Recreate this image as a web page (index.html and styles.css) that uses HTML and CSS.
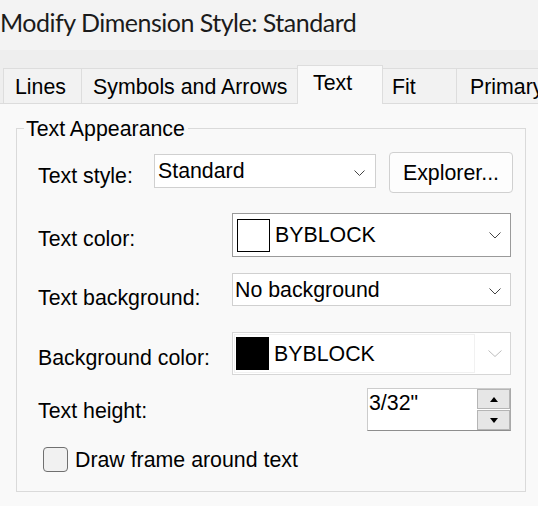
FILE: index.html
```html
<!DOCTYPE html>
<html lang="en">
<head>
<meta charset="utf-8">
<title>Modify Dimension Style: Standard</title>
<link rel="stylesheet" href="styles.css">
</head>
<body>
<div class="window">
  <div class="titlebar">Modify Dimension Style: Standard</div>
  <div class="tabstrip">
    <div class="tab tab-lines">Lines</div>
    <div class="tab tab-symbols">Symbols and Arrows</div>
    <div class="tab tab-text active">Text</div>
    <div class="tab tab-fit">Fit</div>
    <div class="tab tab-primary">Primary Units</div>
  </div>
  <div class="panel">
    <fieldset class="group">
      <legend>Text Appearance</legend>

      <div class="row row-style">
        <span class="label label-style">Text style:</span>
        <div class="combo combo-style">
          <span class="val">Standard</span>
          <svg class="chev chev-style" width="11" height="6" viewBox="0 0 11 6"><polyline points="0.5,0.5 5.5,5.5 10.5,0.5" fill="none" stroke="#444" stroke-width="1"/></svg>
        </div>
        <div class="btn-explorer">Explorer...</div>
      </div>

      <div class="row row-color">
        <span class="label label-wide label-color">Text color:</span>
        <div class="combo combo-color">
          <span class="swatch swatch-white"></span>
          <span class="val val-swatch">BYBLOCK</span>
          <svg class="chev" width="12" height="7" viewBox="0 0 12 7"><polyline points="0.5,0.5 6,6 11.5,0.5" fill="none" stroke="#444" stroke-width="1"/></svg>
        </div>
      </div>

      <div class="row row-bgtext">
        <span class="label label-wide label-bgtext">Text background:</span>
        <div class="combo combo-bgtext">
          <span class="val">No background</span>
          <svg class="chev" width="12" height="7" viewBox="0 0 12 7"><polyline points="0.5,0.5 6,6 11.5,0.5" fill="none" stroke="#444" stroke-width="1"/></svg>
        </div>
      </div>

      <div class="row row-bgcolor">
        <span class="label label-wide label-bgcolor">Background color:</span>
        <div class="combo combo-bgcolor">
          <div class="field">
            <span class="swatch swatch-black"></span>
            <span class="val val-swatch">BYBLOCK</span>
          </div>
          <div class="dropbtn">
            <svg width="14" height="7" viewBox="0 0 14 7"><polyline points="0.5,0.5 7,6.5 13.5,0.5" fill="none" stroke="#bdbdbd" stroke-width="1"/></svg>
          </div>
        </div>
      </div>

      <div class="row row-height">
        <span class="label label-height">Text height:</span>
        <div class="spin">
          <div class="spin-val">3/32"</div>
          <div class="spin-btns">
            <div class="spin-btn"><span class="tri-up"></span></div>
            <div class="spin-btn"><span class="tri-down"></span></div>
          </div>
        </div>
      </div>

      <div class="row row-check">
        <span class="checkbox"></span>
        <span class="check-label">Draw frame around text</span>
      </div>
    </fieldset>
  </div>
</div>
</body>
</html>
```
FILE: styles.css
```css
html, body {
  margin: 0;
  height: 100%;
  overflow: hidden;
}
body {
  font-family: "Liberation Sans", Arial, sans-serif;
  font-size: 21.33px;
  line-height: 24px;
  color: #000;
  background: #eeeeee;
}
.window {
  display: flex;
  flex-direction: column;
  height: 100vh;
}
.titlebar {
  flex: none;
  height: 50px;
  box-sizing: border-box;
  padding-top: 6px;
  background: #f3f3f3;
  font-family: Lato, "Open Sans", sans-serif;
  font-size: 25px;
  line-height: 32px;
  letter-spacing: -0.5px;
  color: #1b1b1b;
  white-space: nowrap;
}
.tabstrip {
  flex: none;
  height: 53px;
  box-sizing: border-box;
  display: flex;
  align-items: flex-end;
  padding-left: 3px;
  background: #eeeeee;
}
.tab {
  flex: none;
  box-sizing: border-box;
  height: 35px;
  padding-top: 6px;
  border: 1px solid #dddddd;
  border-bottom: 0;
  background: #f2f2f2;
  margin-left: -1px;
  white-space: nowrap;
  overflow: hidden;
}
.tab-lines { width: 79px; padding-left: 11px; margin-left: 0; }
.tab-symbols { width: 217px; padding-left: 11px; }
.tab-text { width: 86px; padding-left: 15px; }
.tab-fit { width: 75px; padding-left: 9px; }
.tab-primary { width: 140px; padding-left: 13px; }
.tab.active {
  height: 39px;
  padding-top: 5px;
  margin-bottom: -1px;
  background: #f9f9f9;
  position: relative;
  z-index: 1;
}
.panel {
  flex: 1;
  border-top: 1px solid #dcdcdc;
  background: #f9f9f9;
  padding-left: 16px;
  padding-top: 11px;
}
.group {
  margin: 0;
  padding: 11px 0 19px;
  width: 510px;
  box-sizing: border-box;
  min-width: 0;
  border: 1px solid #dadada;
}
.group legend {
  margin-left: 7px;
  padding: 2px 3px 0 2px;
  line-height: 24px;
}
.row {
  display: flex;
  align-items: flex-start;
  padding-left: 21px;
}
.label {
  flex: none;
  white-space: nowrap;
}
.label-style { width: 116px; margin-top: 12px; }
.label-wide { width: 194px; }
.label-color { margin-top: 14px; }
.label-bgtext { margin-top: 13px; }
.label-bgcolor { margin-top: 14px; }
.label-height { width: 329px; margin-top: 11px; }

.row-style { height: 42px; }
.row-color { height: 44px; margin-top: 19px; }
.row-bgtext { height: 33px; margin-top: 16px; }
.row-bgcolor { height: 43px; margin-top: 26px; }
.row-height { height: 43px; margin-top: 13px; }
.row-check { height: 25px; margin-top: 16px; align-items: center; }

.combo {
  flex: none;
  box-sizing: border-box;
  display: flex;
  align-items: center;
  background: #ffffff;
  border: 1px solid #d0d0d0;
  white-space: nowrap;
}
.chev {
  flex: none;
  display: block;
  margin-left: auto;
  margin-right: 9px;
  align-self: center;
}
.chev-style { margin-right: 10px; }
.combo-style {
  width: 222px;
  height: 34px;
  margin-top: 2px;
  padding-left: 3px;
  padding-top: 4px;
  align-items: flex-start;
}
.btn-explorer {
  flex: none;
  box-sizing: border-box;
  width: 124px;
  height: 41px;
  margin-left: 13px;
  border: 1px solid #d0d0d0;
  border-radius: 4px;
  background: #fdfdfd;
  display: flex;
  align-items: center;
  justify-content: center;
}
.combo-color {
  width: 279px;
  height: 44px;
  padding-left: 4px;
  border-color: #9a9a9a;
}
.swatch {
  flex: none;
  display: block;
  box-sizing: border-box;
  width: 33px;
  height: 33px;
  border: 1px solid #000;
}
.swatch-white { background: #ffffff; }
.swatch-black { background: #000000; }
.val-swatch { margin-left: 5px; }
.combo-bgtext {
  width: 279px;
  height: 33px;
  padding-left: 2px;
  padding-top: 4px;
  align-items: flex-start;
}
.combo-bgcolor {
  width: 279px;
  height: 43px;
  align-items: stretch;
  border-color: #d6d6d6;
}
.field {
  flex: 1;
  margin: 1px;
  border: 1px solid #f1f1f1;
  display: flex;
  align-items: center;
  padding-left: 1px;
}
.dropbtn {
  flex: none;
  width: 34px;
  display: flex;
  align-items: center;
  justify-content: flex-end;
  padding-right: 8px;
  box-sizing: border-box;
}
.dropbtn svg { display: block; }
.spin {
  flex: none;
  box-sizing: border-box;
  width: 144px;
  height: 43px;
  display: flex;
  background: #ffffff;
  border: 1px solid #cccccc;
  border-right-color: #a9a9a9;
  border-bottom-color: #8e8e8e;
}
.spin-val {
  flex: 1;
  padding-top: 2px;
  padding-left: 1px;
}
.spin-btns {
  flex: none;
  width: 33px;
  display: flex;
  flex-direction: column;
  gap: 1px;
}
.spin-btn {
  flex: 1;
  box-sizing: border-box;
  border: 1px solid #b5b5b5;
  background: #e6e6e6;
  display: flex;
  align-items: center;
  justify-content: center;
}
.tri-up {
  width: 0;
  height: 0;
  border-left: 4px solid transparent;
  border-right: 4px solid transparent;
  border-bottom: 5px solid #000;
}
.tri-down {
  width: 0;
  height: 0;
  border-left: 4px solid transparent;
  border-right: 4px solid transparent;
  border-top: 5px solid #000;
}
.checkbox {
  flex: none;
  box-sizing: border-box;
  width: 25px;
  height: 25px;
  margin-left: 5px;
  border: 1px solid #707070;
  border-radius: 4px;
  background: #f1f1f1;
}
.check-label {
  margin-left: 7px;
  white-space: nowrap;
}
```
